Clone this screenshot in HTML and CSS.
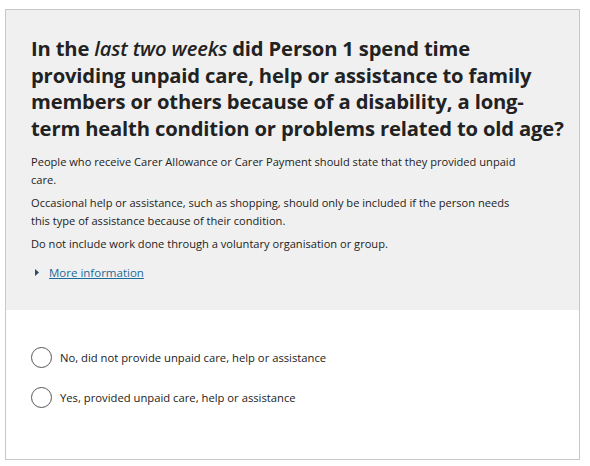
FILE: index.html
```html
<!DOCTYPE html>
<html lang="en">
<head>
<meta charset="utf-8">
<link rel="stylesheet" href="styles.css">
</head>
<body>
<div class="card">
  <div class="question">
    <h1 class="title">In the <em>last two weeks</em> did Person 1 spend time<br>providing unpaid care, help or assistance to family members or others because of a disability, a long-<br>term health condition or problems related to old age?</h1>
    <p class="desc">People who receive Carer Allowance or Carer Payment should state that they provided unpaid care.</p>
    <p class="desc">Occasional help or assistance, such as shopping, should only be included if the person needs this type of assistance because of their condition.</p>
    <p class="desc">Do not include work done through a voluntary organisation or group.</p>
    <div class="more">
      <svg class="tri" width="5" height="7" viewBox="0 0 5 7"><path d="M0 0 L4 3.5 L0 7 Z" fill="#2a4a66"/></svg>
      <a class="more-link" href="#">More information</a>
    </div>
  </div>
  <div class="answers">
    <label class="option"><span class="radio"></span><span class="opt-text">No, did not provide unpaid care, help or assistance</span></label>
    <label class="option"><span class="radio"></span><span class="opt-text">Yes, provided unpaid care, help or assistance</span></label>
  </div>
</div>
</body>
</html>
```
FILE: styles.css
```css
html, body {
  margin: 0;
  padding: 0;
  background: #ffffff;
}
body {
  padding: 9px 0 0 5px;
  font-family: "Open Sans", "Noto Sans", sans-serif;
  color: #222222;
}
.card {
  width: 573px;
  height: 449px;
  border: 1px solid #c8c8c8;
  display: flex;
  flex-direction: column;
  background: #ffffff;
}
.question {
  background: #f0f0f0;
  height: 300px;
  padding: 25px 0 0 25px;
  box-sizing: border-box;
}
.title {
  margin: 0 0 12px 0;
  width: 545px;
  font-size: 20.2px;
  line-height: 26.5px;
  font-weight: 700;
  color: #222222;
  letter-spacing: -0.15px;
}
.title em {
  font-style: italic;
  font-weight: 600;
}
.desc {
  margin: 0 0 5px 0;
  width: 492px;
  font-size: 11.1px;
  line-height: 18px;
  color: #222222;
}
.more {
  display: flex;
  align-items: center;
  gap: 9px;
  margin-top: 12px;
  padding-left: 4px;
}
.more-link {
  font-size: 11.5px;
  color: #1c6a9a;
  text-decoration: underline;
}
.answers {
  padding: 37px 0 0 25px;
  display: flex;
  flex-direction: column;
  gap: 19px;
}
.option {
  display: flex;
  align-items: center;
  gap: 8px;
}
.radio {
  width: 21px;
  height: 21px;
  border: 1.3px solid #555555;
  border-radius: 50%;
  box-sizing: border-box;
  background: #ffffff;
}
.opt-text {
  font-size: 11.25px;
  color: #222222;
}
```
